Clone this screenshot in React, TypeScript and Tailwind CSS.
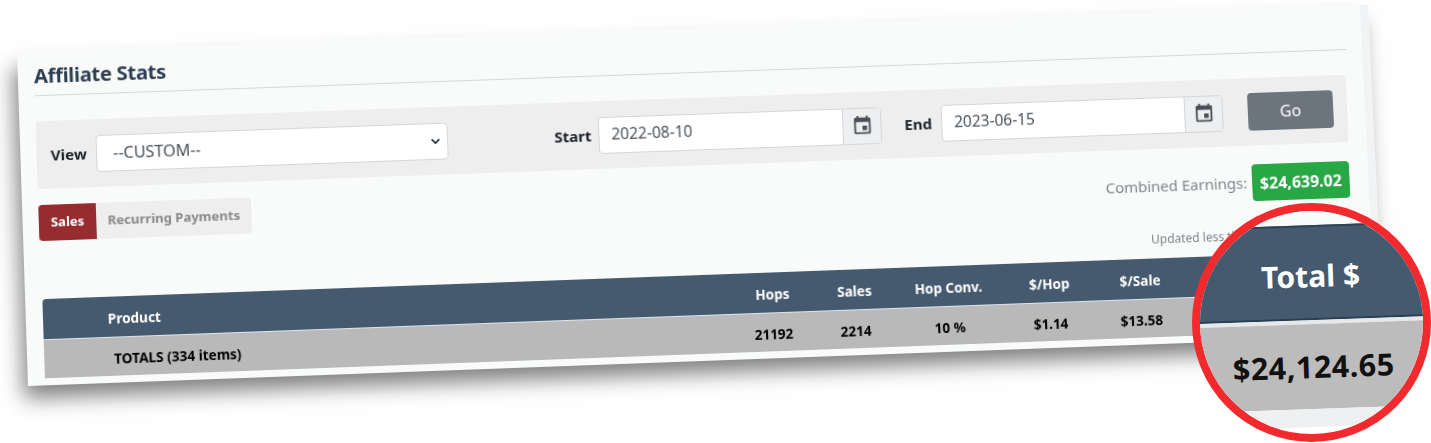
import React from 'react';
import { ChevronDown } from 'lucide-react';
import { MdEvent } from 'react-icons/md';

const columns = [
  { head: 'Hops', value: '21192' },
  { head: 'Sales', value: '2214' },
  { head: 'Hop Conv.', value: '10 %' },
  { head: '$/Hop', value: '$1.14' },
  { head: '$/Sale', value: '$13.58' },
];

const DateField = ({ label, value, labelWidth }: { label: string; value: string; labelWidth: string }) => (
  <div className="flex items-center">
    <span className={`${labelWidth} text-[15px] font-bold text-[#1c2127]`}>{label}</span>
    <div className="flex h-[37px] w-[283px] rounded border border-[#d3d6d9] bg-white">
      <span className="flex flex-1 items-center pl-3 text-[15.5px] text-[#495057]">{value}</span>
      <span className="flex w-[38px] items-center justify-center border-l border-[#d3d6d9] bg-[#eeeff0]">
        <MdEvent className="text-[#495057]" size={22} />
      </span>
    </div>
  </div>
);

const App = () => {
  return (
    <div
      className="relative h-[443px] w-[1431px] overflow-hidden bg-white"
      style={{ fontFamily: '"Noto Sans", "Open Sans", sans-serif' }}
    >
      {/* Tilted page shot */}
      <div className="flex h-[334px] w-[1352px] origin-top-left flex-col overflow-hidden border-r-[8px] border-[#f2f3f4] bg-[#f9fafa] px-4 shadow-[-6px_14px_20px_-2px_rgba(0,0,0,0.5)] blur-[0.5px] [transform:matrix3d(1.007842,-0.034939,0,0.000006316,0.032614,0.995599,0,-0.000011407,0,0,1,0,17,52,0,1)]">
        <div className="flex h-[45px] items-end border-b border-[#d5d8da] pb-[5px]">
          <h1 className="text-[20px] leading-7 font-bold tracking-[-0.3px] text-[#2c3e50]">Affiliate Stats</h1>
        </div>

        {/* Filters */}
        <div className="mt-[25px] mr-[2px] flex h-[68px] shrink-0 items-center rounded bg-[#eeeeef] pl-[14px]">
          <span className="w-[45px] text-[15px] font-bold text-[#1c2127]">View</span>
          <div className="flex h-[37px] w-[350px] items-center justify-between rounded border border-[#d3d6d9] bg-white pr-[5px] pl-4 text-[16px] text-[#495057]">
            --CUSTOM--
            <ChevronDown size={13} strokeWidth={3.5} className="text-[#343a40]" />
          </div>
          <div className="ml-[106px]">
            <DateField label="Start" value="2022-08-10" labelWidth="w-[44px]" />
          </div>
          <div className="ml-[23px]">
            <DateField label="End" value="2023-06-15" labelWidth="w-[37px]" />
          </div>
          <button className="ml-[25px] h-[38px] w-[86px] rounded bg-[#6c757d] text-[16px] text-white">Go</button>
        </div>

        {/* Tabs and earnings */}
        <div className="mt-[16px] flex shrink-0 items-start justify-between">
          <div className="flex h-[36px] rounded bg-[#eeeeee] text-[13px] font-bold">
            <span className="flex w-[57px] items-center justify-center rounded-l bg-[#962c2f] text-white">Sales</span>
            <span className="flex w-[154px] items-center justify-center text-[#8a8a8a]">Recurring Payments</span>
          </div>
          <div className="mt-[3px] mr-[3px] flex items-center gap-[5px]">
            <span className="text-[15px] text-[#80858a]">Combined Earnings:</span>
            <span className="flex h-[37px] w-[98px] items-center justify-center rounded bg-[#28a745] text-[16px] font-bold text-white">
              $24,639.02
            </span>
          </div>
        </div>
        <p className="mt-[27px] ml-[1107px] h-[16px] shrink-0 text-[12px] leading-4 whitespace-nowrap text-[#80858a]">
          Updated less than a minute ago
        </p>

        {/* Table */}
        <div className="mt-[11px] mr-[8px] ml-px shrink-0 text-[13.5px] font-bold">
          <div className="grid h-[41px] grid-cols-[683px_84px_80px_108px_94px_88px_1fr] items-center rounded-t-sm border-b border-[#dbe4ee] bg-[#455a6e] pt-[5px] text-white">
            <span className="pl-[64px]">Product</span>
            {columns.map((c) => (
              <span key={c.head} className="text-center">
                {c.head}
              </span>
            ))}
          </div>
          <div className="grid h-[38px] grid-cols-[683px_84px_80px_108px_94px_88px_1fr] items-center bg-[#b9b9b9] pt-[5px] text-black">
            <span className="pl-[69px]">TOTALS (334 items)</span>
            {columns.map((c) => (
              <span key={c.head} className="text-center">
                {c.value}
              </span>
            ))}
          </div>
        </div>
      </div>

      {/* Magnified total */}
      <div className="absolute top-[203px] left-[1192px] h-[239px] w-[239px] overflow-hidden rounded-full border-[8px] border-[#f32a2d] bg-white">
        <div className="absolute inset-x-0 top-0 h-[20px] bg-[#f9fafa]" />
        <div className="relative -mt-[2px] -ml-[30px] flex w-[290px] -rotate-2 flex-col font-bold">
          <div className="mt-[16px] flex h-[95px] items-center justify-center border-t-2 border-b-2 border-t-[#2f4358] border-b-[#2b3f52] bg-[#455a6e] pt-[6px] pr-[6px] text-[30px] text-white">
            Total $
          </div>
          <div className="h-[4px] bg-[#e6e9ec]" />
          <div className="flex h-[85px] items-center justify-center bg-[#bcbcbc] pr-[6px] text-[30.5px] tracking-[0.5px] text-[#111]">
            $24,124.65
          </div>
          <div className="h-[18px] bg-[#eef0f1]" />
        </div>
      </div>
    </div>
  );
};

export default App;
